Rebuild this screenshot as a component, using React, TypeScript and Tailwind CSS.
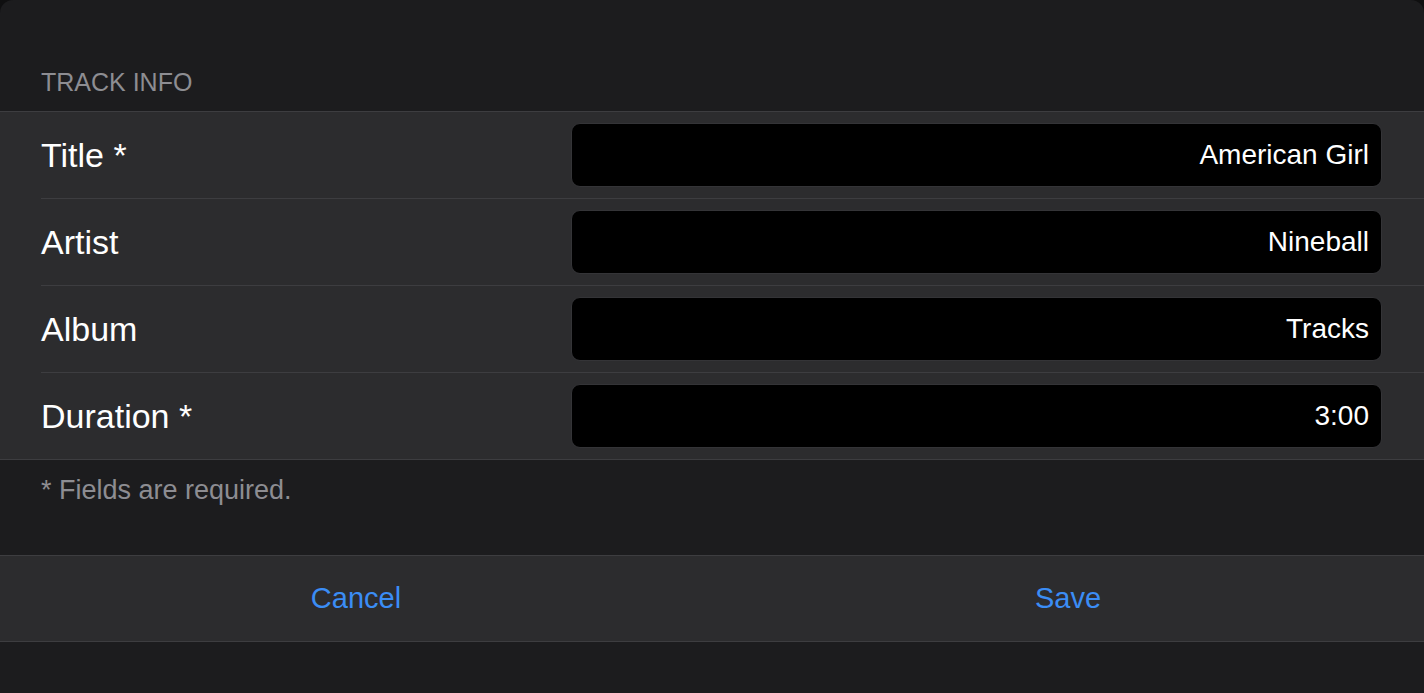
const fields = [
  { label: "Title *", value: "American Girl" },
  { label: "Artist", value: "Nineball" },
  { label: "Album", value: "Tracks" },
  { label: "Duration *", value: "3:00" },
];

export default function App() {
  return (
    <div
      className="w-full h-[693px] bg-[#0f0f10] overflow-hidden"
      style={{ fontFamily: '"Liberation Sans", Arial, sans-serif' }}
    >
      <div className="h-full bg-[#1c1c1e] rounded-t-[13px] flex flex-col">
        <div className="h-[111px] pt-[67px] pl-[41px]">
          <p className="text-[25px] leading-[30px] text-[#8d8d92]">
            TRACK INFO
          </p>
        </div>
        <div className="h-px bg-[#3d3d40]"></div>
        <div className="bg-[#2c2c2e] flex flex-col">
          {fields.map((item, index) => (
            <div key={index} className="flex flex-col">
              <div className="h-[86px] flex flex-row items-center pl-[41px] pr-[42px]">
                <p className="flex-1 text-[34px] leading-[40px] text-white">
                  {item.label}
                </p>
                <div className="w-[811px] h-[64px] bg-black rounded-[9px] border border-[#343437] flex items-center justify-end pr-[12px]">
                  <span className="text-[28px] leading-[34px] text-white">
                    {item.value}
                  </span>
                </div>
              </div>
              {index < fields.length - 1 ? (
                <div className="h-px ml-[41px] bg-[#3d3d40]"></div>
              ) : null}
            </div>
          ))}
        </div>
        <div className="h-px bg-[#3d3d40]"></div>
        <div className="h-[95px] pt-[15px] pl-[41px]">
          <p className="text-[27px] leading-[30px] text-[#8d8d92]">
            * Fields are required.
          </p>
        </div>
        <div className="h-px bg-[#3d3d40]"></div>
        <div className="h-[85px] bg-[#2c2c2e] grid grid-cols-2">
          <button className="flex items-center justify-center text-[29px] text-[#3b8df5]">
            Cancel
          </button>
          <button className="flex items-center justify-center text-[29px] text-[#3b8df5]">
            Save
          </button>
        </div>
        <div className="h-px bg-[#3d3d40]"></div>
      </div>
    </div>
  );
}
